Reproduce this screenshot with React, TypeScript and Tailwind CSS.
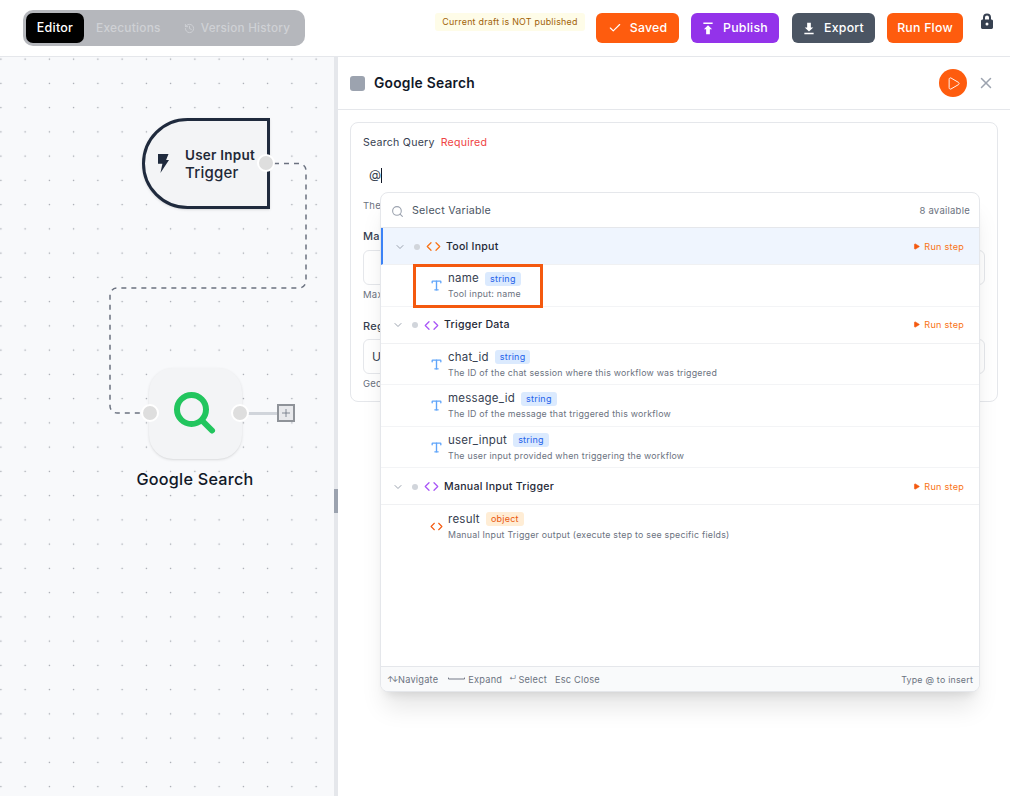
import { Check, ChevronDown, Code, History, Play, Search, Type, X } from "lucide-react";

function Bolt({ className }: { className?: string }) {
  return (
    <svg viewBox="0 0 12 20" className={className} fill="currentColor">
      <path d="M1 0.5h10.5l-2.4 6H12L3.4 19.5l2-9.2H1z" />
    </svg>
  );
}

function Handle({ className }: { className: string }) {
  return <div className={`absolute w-[18px] h-[18px] rounded-full bg-[#dedede] border-2 border-white ${className}`} />;
}

function HeaderButton({ className, icon, label }: { className: string; icon?: React.ReactNode; label: string }) {
  return (
    <button className={`h-[30px] rounded-[6px] text-white text-[12.3px] font-medium flex items-center justify-center ${className}`}>
      {icon}
      {label}
    </button>
  );
}

function Group({ name, iconColor, active }: { name: string; iconColor: string; active?: boolean }) {
  return (
    <div className={`h-[37px] shrink-0 flex items-center border-b border-[#f0f1f3] pr-[15px] pl-[11px] pt-[1px] ${active ? "bg-[#eff5fe] border-l-2 border-l-[#3b82f6]" : ""}`}>
      <ChevronDown className="w-[12px] h-[12px] text-[#9ca3af]" />
      <span className="w-[6px] h-[6px] rounded-full bg-[#d1d5db] ml-[8px]" />
      <Code className={`w-[15px] h-[15px] ml-[6px] ${iconColor}`} strokeWidth={2} />
      <span className="ml-[5px] text-[10.6px] font-medium text-[#1f2937]">{name}</span>
      <span className="ml-auto flex items-center gap-[4px] text-[9.1px] text-[#f97316]">
        <Play className="w-[7px] h-[7px] fill-[#f4590f] text-[#f4590f]" />
        Run step
      </span>
    </div>
  );
}

function Variable({ name, type, desc, object, last }: { name: string; type: string; desc: string; object?: boolean; last?: boolean }) {
  return (
    <div className={`h-[41.5px] shrink-0 flex items-center pl-[49px] pt-[1px] ${last ? "" : "border-b border-[#f3f4f6]"}`}>
      {object ? (
        <Code className="w-[13px] h-[13px] text-[#f4590f]" />
      ) : (
        <Type className="w-[13px] h-[13px] text-[#60a5fa]" strokeWidth={2.5} />
      )}
      <div className="ml-[5px]">
        <div className="flex items-center gap-[6px] h-[15px]">
          <span className="text-[11.5px] text-[#374151]">{name}</span>
          <span className={`h-[14px] px-[5px] rounded-[3px] text-[9px] flex items-center ${object ? "bg-[#ffedd5] text-[#ea580c]" : "bg-[#dbeafe] text-[#2563eb]"}`}>{type}</span>
        </div>
        <div className="text-[8.8px] text-[#6b7280] mt-[1px]">{desc}</div>
      </div>
    </div>
  );
}

export default function App() {
  return (
    <div className="w-[1010px] h-[796px] bg-white flex flex-col overflow-hidden tracking-[0.015em] font-['Inter',sans-serif]">
      <header className="h-[57px] shrink-0 border-b border-[#e5e7eb] flex items-center pl-[23px] pr-[16px]">
        <div className="w-[282px] h-[36px] rounded-[10px] bg-[#b5b7bc] flex items-center pl-[3px]">
          <div className="w-[58px] h-[30px] rounded-[7px] bg-black text-white text-[12.5px] font-medium flex items-center justify-center">Editor</div>
          <span className="ml-[12px] text-[11.9px] font-medium text-[#cfd1d5]">Executions</span>
          <span className="ml-[23px] pt-[1px] flex items-center gap-[6px] text-[11.7px] font-medium text-[#cfd1d5]">
            <History className="w-[11px] h-[11px]" />
            Version History
          </span>
        </div>
        <div className="ml-auto flex items-center">
          <div className="h-[18px] w-[150px] mr-[11px] mb-[12px] rounded-[3px] bg-[#fefce8] text-[#a16207] text-[8.9px] flex items-center justify-center whitespace-nowrap">Current draft is NOT published</div>
          <HeaderButton className="w-[83px] bg-[#fe5c0e] gap-[8px]" label="Saved" icon={<Check className="w-[14px] h-[14px]" />} />
          <HeaderButton
            className="w-[88px] ml-[12px] bg-[#9333ea] gap-[9px]"
            label="Publish"
            icon={
              <svg viewBox="0 0 12 14" className="w-[12px] h-[13px]" fill="currentColor">
                <path d="M1 0.5h10v1.6H1zM6 3.4l4.4 4.4H8v5.4H4V7.8H1.6z" />
              </svg>
            }
          />
          <HeaderButton
            className="w-[83px] ml-[13px] bg-[#4b5563] gap-[9px]"
            label="Export"
            icon={
              <svg viewBox="0 0 12 14" className="w-[12px] h-[13px]" fill="currentColor">
                <path d="M4 0.8h4v5h2.6L6 10.2 1.4 5.8H4zM1 11.6h10v1.6H1z" />
              </svg>
            }
          />
          <HeaderButton className="w-[76px] ml-[12px] bg-[#fe5c0e]" label="Run Flow" />
          <svg viewBox="0 0 14 16" className="w-[14px] h-[16px] ml-[17px] mb-[14px] text-[#374151]" fill="currentColor">
            <path fillRule="evenodd" d="M3 6.5V4.5a4 4 0 0 1 8 0v2h.6A1.4 1.4 0 0 1 13 8v6.6a1.4 1.4 0 0 1-1.4 1.4H2.4A1.4 1.4 0 0 1 1 14.6V8a1.4 1.4 0 0 1 1.4-1.5zm2 0h4V4.5a2 2 0 0 0-4 0zM7 9.5a1.5 1.5 0 1 0 0 3 1.5 1.5 0 0 0 0-3z" />
          </svg>
        </div>
      </header>

      <div className="flex-1 flex min-h-0">
        <div className="relative w-[334px] shrink-0 bg-[#f8f9fb] bg-[radial-gradient(#9a9ea6_0.8px,transparent_1px)] bg-[length:24.25px_24.25px] bg-[position:13px_-10px]">
          <svg className="absolute inset-0 w-full h-full" fill="none">
            <path d="M274 106.5H299a7 7 0 0 1 7 7V224a7 7 0 0 1-7 7H117a7 7 0 0 0-7 7V349a7 7 0 0 0 7 7H142" stroke="#6b7280" strokeWidth="1.5" strokeDasharray="5 5" />
            <path d="M248 356.5H279" stroke="#d1d5db" strokeWidth="3" />
          </svg>
          <div className="absolute left-[142px] top-[61px] w-[128px] h-[91px] rounded-l-[46px] border-[3px] border-[#1f2a3d] bg-[#f3f4f6] flex items-center shadow-sm">
            <Bolt className="w-[12px] h-[21px] ml-[12px] text-[#1f2a3d]" />
            <div className="ml-[16px] text-[#1f2937] leading-[18px]">
              <div className="text-[13.5px] font-semibold whitespace-nowrap">User Input</div>
              <div className="text-[15px] font-medium">Trigger</div>
            </div>
          </div>
          <Handle className="left-[257px] top-[97px]" />
          <div className="absolute left-[149px] top-[311px] w-[93px] h-[91px] rounded-[24px] bg-[#f3f4f6] shadow-sm flex items-center justify-center">
            <svg viewBox="0 0 48 48" className="w-[48px] h-[48px] text-[#22c55e]" fill="none" stroke="currentColor" strokeWidth="6" strokeLinecap="round">
              <circle cx="19.5" cy="19.5" r="14.5" />
              <path d="M30 30.5l10 10" />
            </svg>
          </div>
          <Handle className="left-[141px] top-[347px]" />
          <Handle className="left-[231px] top-[347px]" />
          <div className="absolute left-[277px] top-[347px] w-[18px] h-[18px] border-2 border-[#8f9399] bg-[#e8e9ec] flex items-center justify-center text-[#6b7280]">
            <svg viewBox="0 0 10 10" className="w-[8px] h-[8px]" stroke="currentColor" strokeWidth="1"><path d="M5 0v10M0 5h10" /></svg>
          </div>
          <div className="absolute left-[147px] top-[410px] w-[96px] flex justify-center whitespace-nowrap text-[16.2px] font-medium text-[#111827]">Google Search</div>
        </div>

        <div className="relative w-[4px] shrink-0 bg-[#e5e7eb]">
          <div className="absolute top-[432px] left-0 w-[4px] h-[24px] bg-[#9ca3af]" />
        </div>

        <div className="relative flex-1 min-w-0 bg-white">
          <div className="h-[53px] border-b border-[#e5e7eb] flex items-center pl-[12px] pr-[15px]">
            <div className="w-[15px] h-[15px] rounded-[3px] bg-[#9ca3af]" />
            <span className="ml-[9px] text-[13.8px] font-semibold text-[#111827]">Google Search</span>
            <div className="ml-auto w-[28px] h-[28px] rounded-full bg-[#fe5c0e] flex items-center justify-center">
              <Play className="w-[15px] h-[15px] text-white" strokeWidth={1.5} />
            </div>
            <X className="ml-[10px] w-[18px] h-[18px] text-[#9ca3af]" />
          </div>

          <div className="mx-[12px] mt-[12px] h-[280px] rounded-[8px] border border-[#e5e7eb] px-[12px] pt-[12px]">
            <div className="flex gap-[6px] text-[10.6px] h-[16px] items-center">
              <span className="text-[#374151]">Search Query</span>
              <span className="text-[#ef4444]">Required</span>
            </div>
            <div className="h-[48px] pt-[1px] pl-[6px] flex items-center text-[12.5px] text-[#374151]">@<span className="w-[1px] h-[15px] bg-[#111827]" /></div>
            <div className="text-[9.5px] text-[#6b7280] h-[14px]">The</div>
            <div className="text-[11px] font-medium text-[#374151] mt-[15px] h-[14px]">Max</div>
            <div className="h-[35px] mt-[8px] rounded-[6px] border border-[#e5e7eb]" />
            <div className="text-[9.5px] text-[#6b7280] mt-[3px] h-[14px]">Max</div>
            <div className="text-[11px] font-medium text-[#374151] mt-[16px] h-[14px]">Reg</div>
            <div className="h-[35px] mt-[7px] rounded-[6px] border border-[#e5e7eb] pl-[8px] flex items-center text-[12px] text-[#374151]">U</div>
            <div className="text-[9.5px] text-[#6b7280] mt-[3px] h-[14px]">Geo</div>
          </div>

          <div className="absolute left-[42px] top-[135px] w-[600px] h-[500px] bg-white rounded-[8px] border border-[#e5e7eb] shadow-xl flex flex-col overflow-hidden">
            <div className="h-[35px] shrink-0 border-b border-[#e5e7eb] flex items-center pl-[10px] pr-[9px] pt-[2px]">
              <Search className="w-[13px] h-[13px] text-[#9ca3af]" />
              <span className="ml-[8px] text-[10.7px] text-[#4b5563]">Select Variable</span>
              <span className="ml-auto text-[9.5px] text-[#6b7280]">8 available</span>
            </div>
            <Group name="Tool Input" iconColor="text-[#f97316]" active />
            <Variable name="name" type="string" desc="Tool input: name" />
            <Group name="Trigger Data" iconColor="text-[#a855f7]" />
            <Variable name="chat_id" type="string" desc="The ID of the chat session where this workflow was triggered" />
            <Variable name="message_id" type="string" desc="The ID of the message that triggered this workflow" />
            <Variable name="user_input" type="string" desc="The user input provided when triggering the workflow" />
            <Group name="Manual Input Trigger" iconColor="text-[#a855f7]" />
            <Variable name="result" type="object" object last desc="Manual Input Trigger output (execute step to see specific fields)" />
            <div className="mt-auto h-[25px] shrink-0 bg-[#f9fafb] border-t border-[#e5e7eb] flex items-center px-[6px] pt-[1px] text-[9.2px] text-[#6b7280]">
              <span className="flex items-center gap-[1px]"><span className="tracking-[-0.25em] text-[8px] w-[10px]">↑↓</span>Navigate</span>
              <span className="ml-[10px] flex items-center gap-[3px]">
                <svg viewBox="0 0 18 4" className="w-[17px] h-[4px]" fill="none" stroke="currentColor"><path d="M0.5 0.5v1.5h17V0.5" /></svg>
                Expand
              </span>
              <span className="ml-[7px] flex items-center gap-[2px]"><span className="text-[7px]">↵</span>Select</span>
              <span className="ml-[8px]">Esc Close</span>
              <span className="ml-auto text-[8.8px]">Type @ to insert</span>
            </div>
          </div>
          <div className="absolute left-[75px] top-[207px] w-[130px] h-[44px] border-[3px] border-[#f4590f]" />
        </div>
      </div>
    </div>
  );
}
